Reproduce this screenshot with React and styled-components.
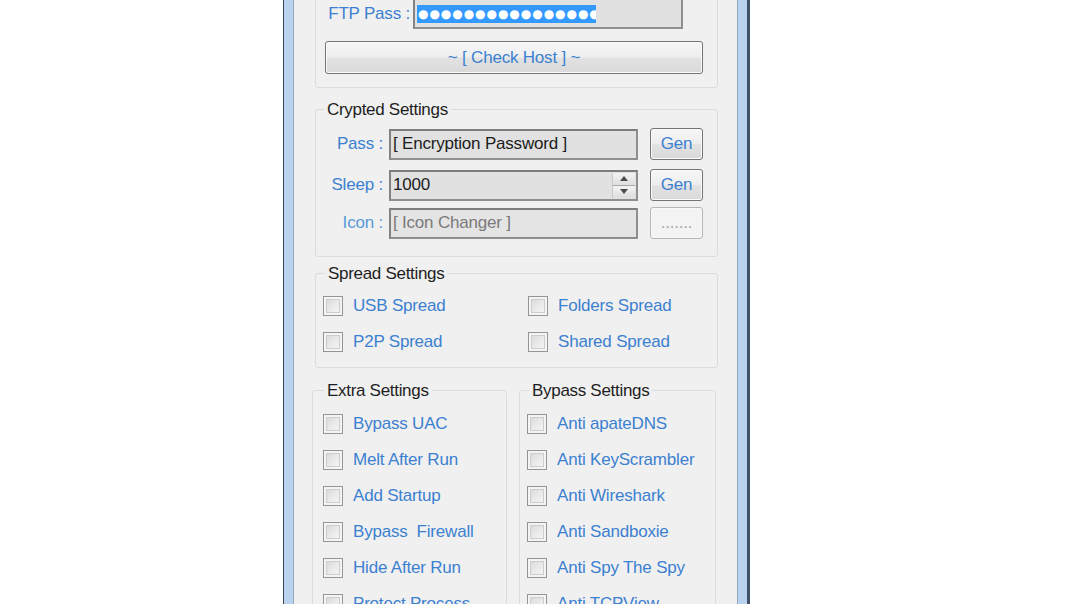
import React from "react";
import styled, { createGlobalStyle } from "styled-components";

const GlobalStyle = createGlobalStyle`
  html, body {
    margin: 0;
    padding: 0;
    background: #ffffff;
  }
  body {
    font-family: "Liberation Sans", Arial, sans-serif;
  }
`;

const Page = styled.div`
  width: 1076px;
  height: 604px;
  overflow: hidden;
  display: flex;
  padding-left: 283px;
  box-sizing: border-box;
  background: #ffffff;
`;

const Window = styled.div`
  width: 467px;
  height: 604px;
  box-sizing: border-box;
  display: flex;
  border-left: 1px solid #3c4753;
  border-right: 3px solid #3f5266;
  background: #b9d3ee;
  padding: 0 9px 0 9px;
`;

const Client = styled.div`
  flex: 1;
  background: #f0f0f0;
  border-left: 1px solid #8fa7c0;
  border-right: 1px solid #8fa7c0;
  overflow: hidden;
  font-size: 17px;
  padding: 0 19px 0 21px;
`;

const Group = styled.fieldset`
  margin: ${(p) => p.$top || 0}px 0 0 0;
  padding: ${(p) => p.$pad || "8px 0 14px 0"};
  border: 1px solid #d9dde1;
  border-radius: 3px;
  min-width: 0;
  box-sizing: border-box;
  width: ${(p) => p.$width || "auto"};
`;

const Legend = styled.legend`
  margin-left: ${(p) => p.$offset || 8}px;
  padding: 0 3px;
  color: #1e1e1e;
  font-size: 17px;
  line-height: 19px;
  letter-spacing: -0.3px;
`;

const FieldRow = styled.div`
  display: flex;
  align-items: center;
  height: ${(p) => p.$h || 32}px;
  margin-top: ${(p) => p.$mt || 0}px;
`;

const Label = styled.div`
  width: ${(p) => p.$w}px;
  margin-right: ${(p) => p.$mr || 6}px;
  text-align: right;
  color: ${(p) => (p.$dim ? "#5a9ad8" : "#3c80d0")};
  white-space: nowrap;
  letter-spacing: -0.2px;
`;

const TextBox = styled.div`
  position: relative;
  width: ${(p) => p.$w}px;
  height: 31px;
  box-sizing: border-box;
  border: 2px solid #8f8f8f;
  border-top-color: #7c7c7c;
  border-left-color: #838383;
  background: ${(p) => (p.$dim ? "#e4e4e4" : "#e1e1e1")};
  display: flex;
  align-items: center;
  padding-left: 2px;
  color: ${(p) => (p.$dim ? "#7a7a7a" : "#1c1c1c")};
  white-space: nowrap;
  letter-spacing: -0.2px;
`;

const Selected = styled.span`
  display: inline-block;
  background: #3399ff;
  color: #ffffff;
  font-family: "DejaVu Sans", sans-serif;
  font-size: 12px;
  line-height: 18px;
  height: 18px;
  width: 179px;
  letter-spacing: 0.95px;
  padding-left: 1px;
  box-sizing: border-box;
  overflow: hidden;
  white-space: nowrap;
`;

const Spinner = styled.div`
  position: absolute;
  right: 1px;
  top: 1px;
  bottom: 1px;
  width: 22px;
  display: flex;
  flex-direction: column;
  border-left: 1px solid #c9c9c9;
`;

const SpinHalf = styled.div`
  flex: 1;
  display: flex;
  align-items: center;
  justify-content: center;
  background: linear-gradient(#f3f3f3, #dedede);
  & + & {
    border-top: 1px solid #a9a9a9;
  }
`;

const Button = styled.button`
  width: ${(p) => p.$w}px;
  height: ${(p) => p.$h || 32}px;
  margin-left: ${(p) => p.$ml || 0}px;
  box-sizing: border-box;
  border: 1px solid ${(p) => (p.disabled ? "#b3b6b9" : "#747474")};
  border-radius: 3px;
  background: ${(p) =>
    p.disabled
      ? "#f3f3f3"
      : "linear-gradient(#f6f6f6 0%, #eeeeee 48%, #e2e2e2 52%, #d9d9d9 100%)"};
  box-shadow: inset 0 0 0 1px ${(p) => (p.disabled ? "#f8f8f8" : "#fbfbfb")};
  color: ${(p) => (p.disabled ? "#a5a5a5" : "#3c80d0")};
  font-family: "Liberation Sans", Arial, sans-serif;
  font-size: 17px;
  padding: 0;
  cursor: default;
  letter-spacing: -0.2px;
`;

const CheckGrid = styled.div`
  display: grid;
  grid-template-columns: ${(p) => p.$cols || "1fr"};
  row-gap: 6px;
  padding-left: ${(p) => p.$pl || 7}px;
`;

const CheckRow = styled.label`
  display: flex;
  align-items: center;
  height: 30px;
  color: #3c80d0;
  white-space: pre;
  letter-spacing: -0.2px;
`;

const Box = styled.span`
  width: 20px;
  height: 20px;
  box-sizing: border-box;
  margin-right: 10px;
  border: 1px solid #959595;
  background: linear-gradient(135deg, #d4d4d4 0%, #ebebeb 55%, #f8f8f8 100%);
  box-shadow: inset 0 0 0 2px #f4f4f4, inset 0 0 0 3px #cdcdcd;
  flex-shrink: 0;
`;

const Split = styled.div`
  display: flex;
  margin-left: -3px;
  margin-top: 13px;
  gap: 12px;
`;

function Check({ children }) {
  return (
    <CheckRow>
      <Box />
      {children}
    </CheckRow>
  );
}

const extras = [
  "Bypass UAC",
  "Melt After Run",
  "Add Startup",
  "Bypass  Firewall",
  "Hide After Run",
  "Protect Process",
];

const bypass = [
  "Anti apateDNS",
  "Anti KeyScrambler",
  "Anti Wireshark",
  "Anti Sandboxie",
  "Anti Spy The Spy",
  "Anti TCPView",
];

export default function App() {
  return (
    <>
      <GlobalStyle />
      <Page>
        <Window>
          <Client>
            {/* FTP settings, scrolled partly out of view */}
            <Group $top={-30} $pad="27px 0 13px 0">
              <FieldRow $h={31}>
                <Label $w={94} $mr={3}>FTP Pass :</Label>
                <TextBox $w={270}>
                  <Selected>●●●●●●●●●●●●●●●●●</Selected>
                </TextBox>
              </FieldRow>
              <FieldRow $h={33} $mt={12}>
                <Button $w={378} $h={33} $ml={9}>
                  ~ [ Check Host ] ~
                </Button>
              </FieldRow>
            </Group>

            <Group $top={12} $pad="9px 0 17px 0">
              <Legend $offset={8}>Crypted Settings</Legend>
              <FieldRow>
                <Label $w={67}>Pass :</Label>
                <TextBox $w={249}>[ Encryption Password ]</TextBox>
                <Button $w={53} $ml={12}>Gen</Button>
              </FieldRow>
              <FieldRow $mt={9}>
                <Label $w={67}>Sleep :</Label>
                <TextBox $w={249}>
                  1000
                  <Spinner>
                    <SpinHalf>
                      <svg width="8" height="5" viewBox="0 0 8 5">
                        <path d="M4 0 L8 5 L0 5 Z" fill="#4a4a4a" />
                      </svg>
                    </SpinHalf>
                    <SpinHalf>
                      <svg width="8" height="5" viewBox="0 0 8 5">
                        <path d="M0 0 L8 0 L4 5 Z" fill="#4a4a4a" />
                      </svg>
                    </SpinHalf>
                  </Spinner>
                </TextBox>
                <Button $w={53} $ml={12}>Gen</Button>
              </FieldRow>
              <FieldRow $mt={6}>
                <Label $w={67} $dim>Icon :</Label>
                <TextBox $w={249} $dim>[ Icon Changer ]</TextBox>
                <Button $w={53} $ml={12} disabled>
                  .......
                </Button>
              </FieldRow>
            </Group>

            <Group $top={7} $pad="8px 0 10px 0">
              <Legend $offset={9}>Spread Settings</Legend>
              <CheckGrid $cols="205px 1fr">
                <Check>USB Spread</Check>
                <Check>Folders Spread</Check>
                <Check>P2P Spread</Check>
                <Check>Shared Spread</Check>
              </CheckGrid>
            </Group>

            <Split>
              <Group $width="195px" $pad="9px 0 10px 0">
                <Legend $offset={11}>Extra Settings</Legend>
                <CheckGrid $pl={10}>
                  {extras.map((t) => (
                    <Check key={t}>{t}</Check>
                  ))}
                </CheckGrid>
              </Group>
              <Group $width="197px" $pad="9px 0 10px 0">
                <Legend $offset={9}>Bypass Settings</Legend>
                <CheckGrid $pl={7}>
                  {bypass.map((t) => (
                    <Check key={t}>{t}</Check>
                  ))}
                </CheckGrid>
              </Group>
            </Split>
          </Client>
        </Window>
      </Page>
    </>
  );
}
